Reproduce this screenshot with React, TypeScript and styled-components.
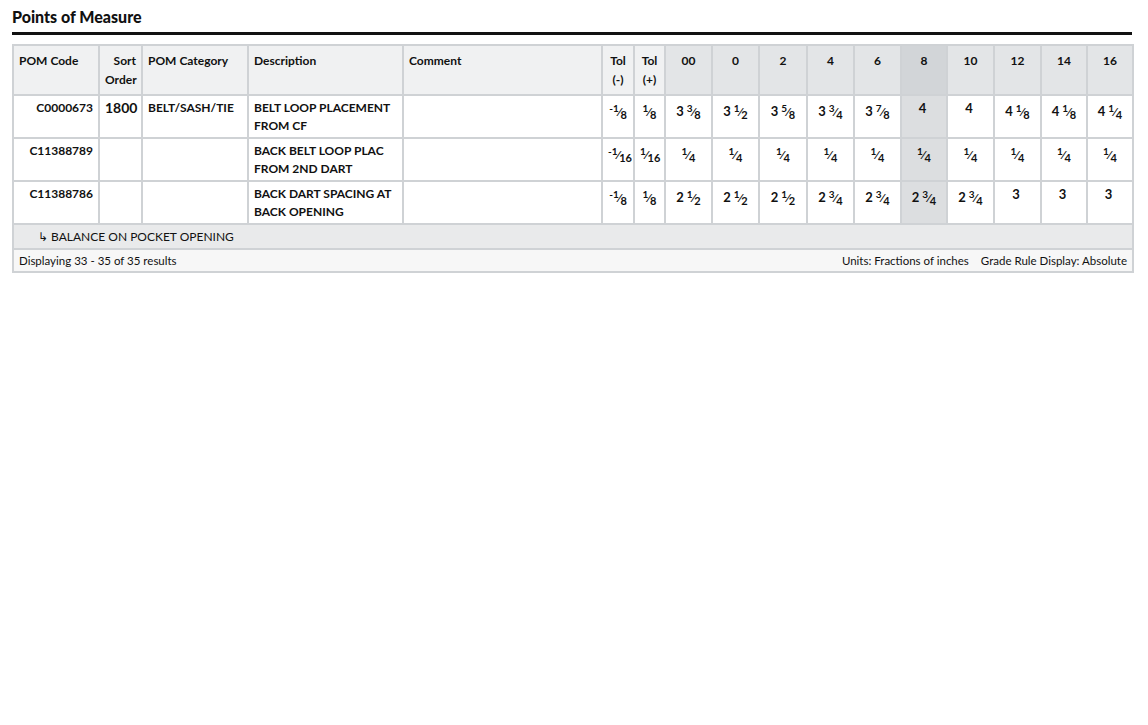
import React from "react";
import styled, { createGlobalStyle } from "styled-components";

const Global = createGlobalStyle`
  body { margin: 0; background: #fff; font-family: Lato, "Open Sans", sans-serif; color: #111; }
`;

const Page = styled.div`
  padding: 7px 12px 0 12px;
  width: 1120px;
`;
const Title = styled.h2`
  margin: 0;
  font-size: 16px;
  font-weight: 900;
  padding-bottom: 6px;
  border-bottom: 3px solid #111;
`;
const Table = styled.table`
  margin-top: 9px;
  width: 1120px;
  border-collapse: collapse;
  table-layout: fixed;
  font-size: 12px;
  border: 2px solid #cfd2d5;
`;
const Th = styled.th<{ $bg?: string; $align?: string }>`
  background: ${(p) => p.$bg || "#f0f1f2"};
  border: 2px solid #cfd2d5;
  text-align: ${(p) => p.$align || "left"};
  vertical-align: top;
  padding: 5px 5px 5px;
  line-height: 19px;
  font-weight: 700;
`;
const Td = styled.td<{ $bg?: string; $align?: string; $big?: boolean }>`
  background: ${(p) => p.$bg || "#fff"};
  border: 2px solid #cfd2d5;
  text-align: ${(p) => p.$align || "left"};
  vertical-align: top;
  padding: 3px 5px 2px;
  line-height: 18px;
  font-weight: 700;
  font-size: ${(p) => (p.$big ? "14px" : "12px")};
  height: 36px;
`;
const Sub = styled.td`
  background: #e9eaeb;
  border: 2px solid #cfd2d5;
  padding: 3px 5px 3px 24px;
  font-size: 12px;
  height: 17px;
`;
const Foot = styled.td`
  background: #f7f7f7;
  border: 2px solid #cfd2d5;
  padding: 3px 5px;
  font-size: 11.5px;
  height: 15px;
`;
const FootInner = styled.div`
  display: flex;
  justify-content: space-between;
`;
const FootRight = styled.div`
  display: flex;
  gap: 12px;
`;
const Whole = styled.span`
  font-size: 13px;
  margin-right: 3px;
`;
const Num = styled.sup`
  font-size: 10px;
  vertical-align: 4px;
`;
const Den = styled.sub`
  font-size: 11px;
  vertical-align: -3px;
`;

const Val = ({ v }: { v: string }) => {
  const parts = v.split(" ");
  let whole = "";
  let frac = "";
  if (parts.length === 2) [whole, frac] = parts;
  else if (v.includes("/")) frac = v;
  else whole = v;
  let neg = false;
  if (frac.startsWith("-")) { neg = true; frac = frac.slice(1); }
  const [n, d] = frac ? frac.split("/") : ["", ""];
  return (
    <>
      {whole && <Whole>{whole}</Whole>}
      {frac && (
        <>
          {neg && <Num>-</Num>}
          <Num>{n}</Num>⁄<Den>{d}</Den>
        </>
      )}
    </>
  );
};

const sizes = ["00", "0", "2", "4", "6", "8", "10", "12", "14", "16"];
const widths = [86, 43, 106, 155, 199, 32, 31, 47, 47, 48, 47, 47, 46, 47, 47, 46, 46];

const rows = [
  { code: "C0000673", sort: "1800", cat: "BELT/SASH/TIE", desc: "BELT LOOP PLACEMENT FROM CF", tm: "-1/8", tp: "1/8",
    v: ["3 3/8", "3 1/2", "3 5/8", "3 3/4", "3 7/8", "4", "4", "4 1/8", "4 1/8", "4 1/4"] },
  { code: "C11388789", sort: "", cat: "", desc: "BACK BELT LOOP PLAC FROM 2ND DART", tm: "-1/16", tp: "1/16",
    v: Array(10).fill("1/4") },
  { code: "C11388786", sort: "", cat: "", desc: "BACK DART SPACING AT BACK OPENING", tm: "-1/8", tp: "1/8",
    v: ["2 1/2", "2 1/2", "2 1/2", "2 3/4", "2 3/4", "2 3/4", "2 3/4", "3", "3", "3"] },
];

export default function App() {
  return (
    <Page>
      <Global />
      <Title>Points of Measure</Title>
      <Table>
        <colgroup>
          {widths.map((w, i) => <col key={i} style={{ width: w }} />)}
        </colgroup>
        <thead>
          <tr>
            <Th>POM Code</Th>
            <Th $align="right">Sort Order</Th>
            <Th>POM Category</Th>
            <Th>Description</Th>
            <Th>Comment</Th>
            <Th $align="center">Tol (-)</Th>
            <Th $align="center">Tol (+)</Th>
            {sizes.map((s) => (
              <Th key={s} $align="center" $bg={s === "8" ? "#d2d5d8" : "#e3e5e7"}>{s}</Th>
            ))}
          </tr>
        </thead>
        <tbody>
          {rows.map((r) => (
            <tr key={r.code}>
              <Td $align="right">{r.code}</Td>
              <Td $align="right" $big>{r.sort}</Td>
              <Td>{r.cat}</Td>
              <Td>{r.desc}</Td>
              <Td />
              <Td $align="center"><Val v={r.tm} /></Td>
              <Td $align="center"><Val v={r.tp} /></Td>
              {r.v.map((v, i) => (
                <Td key={i} $align="center" $bg={i === 5 ? "#dcdee0" : "#fff"}><Val v={v} /></Td>
              ))}
            </tr>
          ))}
          <tr>
            <Sub colSpan={17}>↳ BALANCE ON POCKET OPENING</Sub>
          </tr>
          <tr>
            <Foot colSpan={17}>
              <FootInner>
                <span>Displaying 33 - 35 of 35 results</span>
                <FootRight>
                  <span>Units: Fractions of inches</span>
                  <span>Grade Rule Display: Absolute</span>
                </FootRight>
              </FootInner>
            </Foot>
          </tr>
        </tbody>
      </Table>
    </Page>
  );
}
